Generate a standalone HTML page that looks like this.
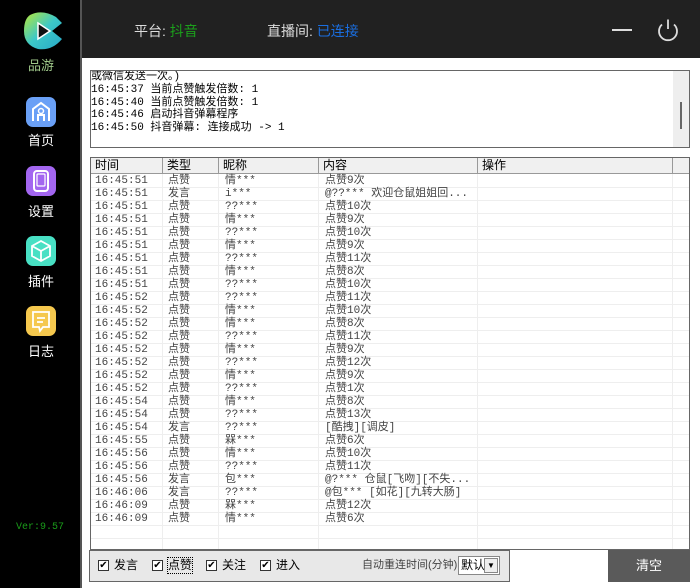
<!DOCTYPE html>
<html><head><meta charset="utf-8"><style>
*{margin:0;padding:0;box-sizing:border-box}
body{width:700px;height:588px;overflow:hidden;background:#fff;font-family:"Liberation Sans","Noto Sans CJK SC",sans-serif;position:relative}
.side{position:absolute;left:0;top:0;width:80px;height:588px;background:#000}
.sideb{position:absolute;left:80px;top:0;width:2px;height:588px;background:#555}
.top{position:absolute;left:82px;top:0;width:618px;height:58px;background:#212121}
.nav{position:absolute;left:26px;width:30px;height:30px;border-radius:7px}
.lbl{position:absolute;left:0;width:82px;text-align:center;color:#fff;font-size:13px}
.log{position:absolute;left:90px;top:70px;width:600px;height:78px;border:1px solid #666;background:#fff;font-family:"Liberation Mono","WenQuanYi Zen Hei",monospace;font-size:11px;line-height:12.8px;color:#000;padding:0;overflow:hidden;white-space:nowrap}
.sb{position:absolute;right:0;top:0;width:16px;height:76px;background:#eee}
.tbl{position:absolute;left:90px;top:157px;width:600px;height:393px;border:1px solid #666;overflow:hidden}
.row{position:absolute;left:0;height:13px;width:598px;border-bottom:1px solid #eee;font-family:"Liberation Mono","WenQuanYi Zen Hei",monospace;font-size:11px;line-height:13px;color:#444;white-space:nowrap}
.row span{position:absolute;top:0}
.vl{position:absolute;top:16px;bottom:0;width:1px;background:#eee}
.hd{position:absolute;left:0;top:0;width:598px;height:16px;background:#f0f0f0;border-bottom:1px solid #999;font-size:12px;line-height:15px;color:#000}
.hd span{position:absolute;top:0;height:15px;border-right:1px solid #999;padding-left:4px}
.bot{position:absolute;left:89px;top:550px;width:421px;height:32px;background:#e8e8e8;border:1px solid #666;font-size:12px;color:#000;white-space:nowrap}
.cb{position:absolute;top:9px;width:11px;height:11px;border:1px solid #333;background:#fff;font-size:10px;line-height:9px;text-align:center}
.ct{position:absolute;top:7px;line-height:15px}
</style></head><body>
<div class="side"></div><div class="sideb"></div>
<svg style="position:absolute;left:22px;top:11px" width="42" height="40" viewBox="0 0 42 40">
<defs><linearGradient id="g" x1="0" x2="1" y1="0" y2="1"><stop offset="0" stop-color="#b8e836"/><stop offset="0.5" stop-color="#3cc8c8"/><stop offset="1" stop-color="#28a8c8"/></linearGradient></defs>
<path d="M8 4 Q20 -2 34 6 L40 12 L30 20 L40 28 Q30 40 16 38 Q2 34 2 20 Q2 8 8 4Z" fill="url(#g)"/>
<path d="M16 12 L28 20 L16 28Z" fill="#111" stroke="#fff" stroke-width="1.5"/></svg>
<div class="lbl" style="top:55px;color:#9fc88a">品游</div>
<div class="nav" style="top:97px;background:#6aa0f6"><svg width="30" height="30"><path d="M7 24 V12 L15 6 L23 12 V24 M12 24 V18 H18 V24" fill="none" stroke="#fff" stroke-width="2"/><circle cx="15" cy="14" r="2.5" fill="none" stroke="#fff" stroke-width="1.5"/></svg></div>
<div class="lbl" style="top:130px">首页</div>
<div class="nav" style="top:166px;background:#a366f0"><svg width="30" height="30"><rect x="8" y="5" width="14" height="20" rx="3" fill="none" stroke="#fff" stroke-width="2"/><rect x="11" y="8" width="8" height="12" rx="1" fill="none" stroke="#fff" stroke-width="1.2"/></svg></div>
<div class="lbl" style="top:201px">设置</div>
<div class="nav" style="top:236px;background:#48e0c4"><svg width="30" height="30"><path d="M15 5 L24 10 V20 L15 25 L6 20 V10Z M6 10 L15 15 L24 10 M15 15 V25" fill="none" stroke="#fff" stroke-width="1.8"/></svg></div>
<div class="lbl" style="top:271px">插件</div>
<div class="nav" style="top:306px;background:#f5c84e"><svg width="30" height="30"><path d="M7 6 H23 V21 H17 L14 25 L13 21 H7Z M11 12 H19 M11 16 H17" fill="none" stroke="#fff" stroke-width="1.8"/></svg></div>
<div class="lbl" style="top:341px">日志</div>
<div style="position:absolute;left:16px;top:522px;color:#1a9c1a;font-family:'Liberation Mono',monospace;font-size:10px">Ver:9.57</div>
<div class="top"></div>
<div style="position:absolute;left:134px;top:21px;color:#ddd;font-size:14px">平台: <span style="color:#1ca01c">抖音</span></div>
<div style="position:absolute;left:267px;top:21px;color:#ddd;font-size:14px">直播间: <span style="color:#1a6ee0">已连接</span></div>
<div style="position:absolute;left:612px;top:29px;width:20px;height:2px;background:#ddd"></div>
<svg style="position:absolute;left:656px;top:18px" width="24" height="24"><path d="M6 6.5 A9 9 0 1 0 18 6.5" fill="none" stroke="#ddd" stroke-width="1.8"/><path d="M12 1.5 V11" stroke="#ddd" stroke-width="1.8"/></svg>
<div class="log"><div>或微信发送一次。)<br>16:45:37 当前点赞触发倍数: 1<br>16:45:40 当前点赞触发倍数: 1<br>16:45:46 启动抖音弹幕程序<br>16:45:50 抖音弹幕: 连接成功 -> 1</div><div class="sb"><div style="position:absolute;left:7px;top:31px;width:2px;height:27px;background:#666"></div></div></div>
<div class="tbl">
<div class="hd"><span style="left:0;width:72px">时间</span><span style="left:72px;width:56px">类型</span><span style="left:128px;width:100px">昵称</span><span style="left:228px;width:159px">内容</span><span style="left:387px;width:195px">操作</span></div>
<div class="vl" style="left:71px"></div><div class="vl" style="left:127px"></div><div class="vl" style="left:227px"></div><div class="vl" style="left:386px"></div><div class="vl" style="left:581px"></div>
<div id="rows"></div>
</div>
<div class="bot">
<div class="cb" style="left:8px">✔</div><div class="ct" style="left:24px">发言</div>
<div class="cb" style="left:62px">✔</div><div class="ct" style="left:78px;outline:1px dotted #000">点赞</div>
<div class="cb" style="left:116px">✔</div><div class="ct" style="left:132px">关注</div>
<div class="cb" style="left:170px">✔</div><div class="ct" style="left:186px">进入</div>
<div class="ct" style="left:272px;color:#444;font-size:11px">自动重连时间(分钟)</div>
<div style="position:absolute;left:368px;top:5px;width:42px;height:19px;background:#fff;border:1px solid #888;font-size:12px;line-height:17px;padding-left:2px">默认<div style="position:absolute;right:1px;top:1px;width:14px;height:15px;background:#eee;border:1px solid #888;font-size:8px;text-align:center;line-height:13px">▼</div></div>
</div>
<div style="position:absolute;left:608px;top:550px;width:82px;height:32px;background:#5a5a5a;color:#fff;font-size:13px;text-align:center;line-height:32px">清空</div>
<script>
var d=[["16:45:51","点赞","情***","点赞9次"],["16:45:51","发言","i***","@??*** 欢迎仓鼠姐姐回..."],["16:45:51","点赞","??***","点赞10次"],["16:45:51","点赞","情***","点赞9次"],["16:45:51","点赞","??***","点赞10次"],["16:45:51","点赞","情***","点赞9次"],["16:45:51","点赞","??***","点赞11次"],["16:45:51","点赞","情***","点赞8次"],["16:45:51","点赞","??***","点赞10次"],["16:45:52","点赞","??***","点赞11次"],["16:45:52","点赞","情***","点赞10次"],["16:45:52","点赞","情***","点赞8次"],["16:45:52","点赞","??***","点赞11次"],["16:45:52","点赞","情***","点赞9次"],["16:45:52","点赞","??***","点赞12次"],["16:45:52","点赞","情***","点赞9次"],["16:45:52","点赞","??***","点赞1次"],["16:45:54","点赞","情***","点赞8次"],["16:45:54","点赞","??***","点赞13次"],["16:45:54","发言","??***","[酷拽][调皮]"],["16:45:55","点赞","槑***","点赞6次"],["16:45:56","点赞","情***","点赞10次"],["16:45:56","点赞","??***","点赞11次"],["16:45:56","发言","包***","@?*** 仓鼠[飞吻][不失..."],["16:46:06","发言","??***","@包*** [如花][九转大肠]"],["16:46:09","点赞","槑***","点赞12次"],["16:46:09","点赞","情***","点赞6次"]];
var h="";for(var i=0;i<d.length+2;i++){var r=d[i]||["","","",""];h+='<div class="row" style="top:'+(17+i*13)+'px"><span style="left:4px">'+r[0]+'</span><span style="left:77px">'+r[1]+'</span><span style="left:134px">'+r[2]+'</span><span style="left:234px">'+r[3]+'</span></div>';}
document.getElementById("rows").innerHTML=h;
</script>
</body></html>
